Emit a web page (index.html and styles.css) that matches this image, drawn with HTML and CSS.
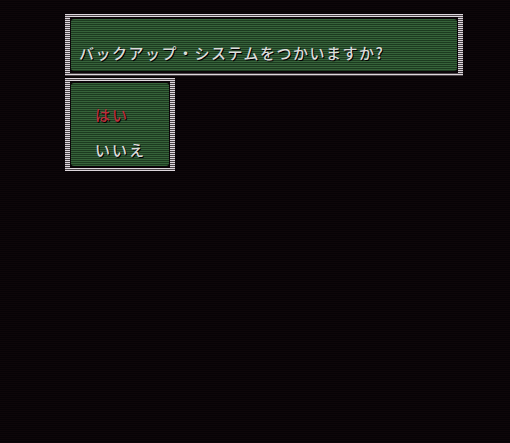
FILE: index.html
```html
<!DOCTYPE html>
<html lang="ja">
<head>
<meta charset="utf-8">
<link rel="stylesheet" href="styles.css">
</head>
<body>
<div class="screen">
  <div class="frame frame-message">
    <div class="inner">
      <div class="panel panel-message">
        <p class="message">バックアップ・システムをつかいますか?</p>
      </div>
    </div>
  </div>
  <div class="frame frame-menu">
    <div class="inner">
      <div class="panel panel-menu">
        <div class="option selected">はい</div>
        <div class="option">いいえ</div>
      </div>
    </div>
  </div>
</div>
</body>
</html>
```
FILE: styles.css
```css
html, body {
  margin: 0;
  padding: 0;
  background: #0b0509;
}
.screen {
  width: 510px;
  height: 443px;
  background: repeating-linear-gradient(to bottom, #0d0609 0, #0d0609 1px, #070306 1px, #070306 2px);
  padding: 14px 0 0 65px;
  box-sizing: border-box;
  display: flex;
  flex-direction: column;
  align-items: flex-start;
  gap: 2px;
  font-family: "Noto Sans CJK JP", "Noto Sans", sans-serif;
}
.frame {
  box-sizing: border-box;
  padding: 3px 5px;
  background: repeating-linear-gradient(to bottom, #ddd6dc 0, #ddd6dc 1px, #4a4448 1px, #4a4448 2px);
  display: flex;
}
.frame-message {
  width: 398px;
  height: 62px;
}
.frame-menu {
  width: 110px;
  height: 93px;
}
.inner {
  flex: 1;
  display: flex;
  padding: 2px 1px;
  background: #0b0509;
}
.panel {
  flex: 1;
  border-radius: 3px;
  background: repeating-linear-gradient(to bottom, #36633a 0, #36633a 1px, #1d3a20 1px, #1d3a20 2px);
}
.panel-message {
  display: flex;
  align-items: flex-end;
  padding: 0 0 9px 8px;
}
.message {
  margin: 0;
  font-size: 15px;
  line-height: 18px;
  letter-spacing: 1.5px;
  font-weight: 500;
  color: #dcdcdc;
  text-shadow: 1px 1px 0 #000;
  white-space: nowrap;
}
.panel-menu {
  display: flex;
  flex-direction: column;
  gap: 17px;
  padding: 23px 0 0 24px;
}
.option {
  font-size: 15px;
  line-height: 18px;
  letter-spacing: 2px;
  font-weight: 500;
  color: #dcdcdc;
  text-shadow: 1px 1px 0 #000;
}
.option.selected {
  color: #b8303c;
}
```
